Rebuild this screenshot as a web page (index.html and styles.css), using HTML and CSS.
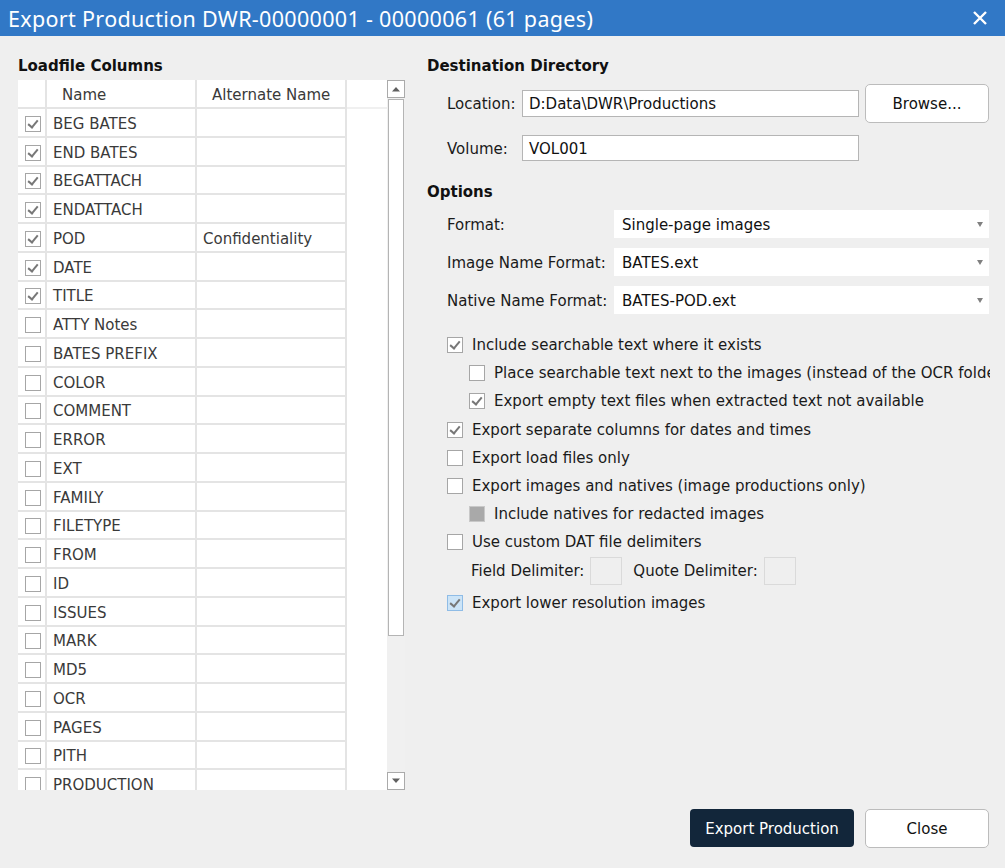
FILE: index.html
```html
<!DOCTYPE html>
<html>
<head>
<meta charset="utf-8">
<link rel="stylesheet" href="styles.css">
</head>
<body>
<div class="dialog">
  <div class="titlebar">
    <span class="title">Export Production DWR-00000001 - 00000061 (61 pages)</span>
    <svg class="close-x" width="16" height="16" viewBox="0 0 16 16"><path d="M2 2 L14 14 M14 2 L2 14" stroke="#fff" stroke-width="2.4" fill="none"/></svg>
  </div>
  <div class="main">
    <div class="left">
      <div class="heading">Loadfile Columns</div>
      <div class="table">
        <div class="grid">
          <div class="row head">
            <div class="c c1"></div>
            <div class="c c2">Name</div>
            <div class="c c3">Alternate Name</div>
            <div class="c c4"></div>
          </div>
          <div class="row"><div class="c c1"><span class="cb on"></span></div><div class="c c2">BEG BATES</div><div class="c c3"></div><div class="c c4"></div></div>
          <div class="row"><div class="c c1"><span class="cb on"></span></div><div class="c c2">END BATES</div><div class="c c3"></div><div class="c c4"></div></div>
          <div class="row"><div class="c c1"><span class="cb on"></span></div><div class="c c2">BEGATTACH</div><div class="c c3"></div><div class="c c4"></div></div>
          <div class="row"><div class="c c1"><span class="cb on"></span></div><div class="c c2">ENDATTACH</div><div class="c c3"></div><div class="c c4"></div></div>
          <div class="row"><div class="c c1"><span class="cb on"></span></div><div class="c c2">POD</div><div class="c c3">Confidentiality</div><div class="c c4"></div></div>
          <div class="row"><div class="c c1"><span class="cb on"></span></div><div class="c c2">DATE</div><div class="c c3"></div><div class="c c4"></div></div>
          <div class="row"><div class="c c1"><span class="cb on"></span></div><div class="c c2">TITLE</div><div class="c c3"></div><div class="c c4"></div></div>
          <div class="row"><div class="c c1"><span class="cb"></span></div><div class="c c2">ATTY Notes</div><div class="c c3"></div><div class="c c4"></div></div>
          <div class="row"><div class="c c1"><span class="cb"></span></div><div class="c c2">BATES PREFIX</div><div class="c c3"></div><div class="c c4"></div></div>
          <div class="row"><div class="c c1"><span class="cb"></span></div><div class="c c2">COLOR</div><div class="c c3"></div><div class="c c4"></div></div>
          <div class="row"><div class="c c1"><span class="cb"></span></div><div class="c c2">COMMENT</div><div class="c c3"></div><div class="c c4"></div></div>
          <div class="row"><div class="c c1"><span class="cb"></span></div><div class="c c2">ERROR</div><div class="c c3"></div><div class="c c4"></div></div>
          <div class="row"><div class="c c1"><span class="cb"></span></div><div class="c c2">EXT</div><div class="c c3"></div><div class="c c4"></div></div>
          <div class="row"><div class="c c1"><span class="cb"></span></div><div class="c c2">FAMILY</div><div class="c c3"></div><div class="c c4"></div></div>
          <div class="row"><div class="c c1"><span class="cb"></span></div><div class="c c2">FILETYPE</div><div class="c c3"></div><div class="c c4"></div></div>
          <div class="row"><div class="c c1"><span class="cb"></span></div><div class="c c2">FROM</div><div class="c c3"></div><div class="c c4"></div></div>
          <div class="row"><div class="c c1"><span class="cb"></span></div><div class="c c2">ID</div><div class="c c3"></div><div class="c c4"></div></div>
          <div class="row"><div class="c c1"><span class="cb"></span></div><div class="c c2">ISSUES</div><div class="c c3"></div><div class="c c4"></div></div>
          <div class="row"><div class="c c1"><span class="cb"></span></div><div class="c c2">MARK</div><div class="c c3"></div><div class="c c4"></div></div>
          <div class="row"><div class="c c1"><span class="cb"></span></div><div class="c c2">MD5</div><div class="c c3"></div><div class="c c4"></div></div>
          <div class="row"><div class="c c1"><span class="cb"></span></div><div class="c c2">OCR</div><div class="c c3"></div><div class="c c4"></div></div>
          <div class="row"><div class="c c1"><span class="cb"></span></div><div class="c c2">PAGES</div><div class="c c3"></div><div class="c c4"></div></div>
          <div class="row"><div class="c c1"><span class="cb"></span></div><div class="c c2">PITH</div><div class="c c3"></div><div class="c c4"></div></div>
          <div class="row"><div class="c c1"><span class="cb"></span></div><div class="c c2">PRODUCTION</div><div class="c c3"></div><div class="c c4"></div></div>
        </div>
        <div class="scrollbar">
          <div class="sb-btn"><svg width="10" height="6" viewBox="0 0 10 6"><path d="M1 5.5 L5 1 L9 5.5 Z" fill="#606060"/></svg></div>
          <div class="sb-track"><div class="sb-thumb"></div></div>
          <div class="sb-btn"><svg width="10" height="6" viewBox="0 0 10 6"><path d="M1 0.5 L5 5 L9 0.5 Z" fill="#606060"/></svg></div>
        </div>
      </div>
    </div>
    <div class="right">
      <div class="heading">Destination Directory</div>
      <div class="frow loc">
        <span class="lbl">Location:</span>
        <div class="input">D:Data\DWR\Productions</div>
        <div class="btn light browse">Browse...</div>
      </div>
      <div class="frow vol">
        <span class="lbl">Volume:</span>
        <div class="input">VOL001</div>
      </div>
      <div class="heading opts">Options</div>
      <div class="srow"><span class="slbl">Format:</span><div class="select">Single-page images<span class="arrow"></span></div></div>
      <div class="srow"><span class="slbl">Image Name Format:</span><div class="select">BATES.ext<span class="arrow"></span></div></div>
      <div class="srow"><span class="slbl">Native Name Format:</span><div class="select">BATES-POD.ext<span class="arrow"></span></div></div>
      <div class="checks">
        <div class="crow"><span class="cb on"></span><span>Include searchable text where it exists</span></div>
        <div class="crow sub"><span class="cb"></span><span class="clip">Place searchable text next to the images (instead of the OCR folder)</span></div>
        <div class="crow sub"><span class="cb on"></span><span>Export empty text files when extracted text not available</span></div>
        <div class="crow"><span class="cb on"></span><span>Export separate columns for dates and times</span></div>
        <div class="crow"><span class="cb"></span><span>Export load files only</span></div>
        <div class="crow"><span class="cb"></span><span>Export images and natives (image productions only)</span></div>
        <div class="crow sub"><span class="cb dis"></span><span>Include natives for redacted images</span></div>
        <div class="crow"><span class="cb"></span><span>Use custom DAT file delimiters</span></div>
        <div class="crow delim"><span>Field Delimiter:</span><span class="dbox"></span><span class="qlbl">Quote Delimiter:</span><span class="dbox"></span></div>
        <div class="crow last"><span class="cb on hover"></span><span>Export lower resolution images</span></div>
      </div>
    </div>
  </div>
  <div class="footer">
    <div class="btn dark">Export Production</div>
    <div class="btn light close">Close</div>
  </div>
</div>
</body>
</html>
```

FILE: styles.css
```css
* { box-sizing: border-box; }
html, body { margin: 0; padding: 0; }
body {
  width: 1005px;
  height: 868px;
  overflow: hidden;
  background: #efefef;
  font-family: "DejaVu Sans", Verdana, sans-serif;
  font-size: 15px;
  color: #1a1a1a;
}
.dialog {
  height: 868px;
  display: flex;
  flex-direction: column;
}
.titlebar {
  height: 36px;
  flex: none;
  background: #3178c6;
  color: #fff;
  display: flex;
  align-items: center;
  justify-content: space-between;
  padding: 0 17px 0 8px;
}
.title {
  font-family: "Noto Sans", "Open Sans", sans-serif;
  font-size: 21.5px;
  letter-spacing: 0.32px;
}
.main {
  flex: 1;
  display: flex;
  gap: 22px;
  padding: 17px 16px 0 18px;
}
.heading {
  height: 27px;
  line-height: 25px;
  padding-top: 1px;
  font-weight: bold;
  font-size: 15px;
  color: #111;
}
.left { width: 387px; flex: none; }
.table {
  height: 710px;
  display: flex;
  background: #fff;
}
.grid {
  width: 369px;
  overflow: hidden;
  color: #3a3a3a;
}
.row {
  display: flex;
  height: 28.75px;
}
.row.head { height: 29px; }
.c {
  height: 100%;
  display: flex;
  align-items: center;
  border-bottom: 2px solid #e4e4e4;
  border-right: 2px solid #e4e4e4;
  padding-left: 6px;
  padding-top: 3px;
  white-space: nowrap;
  overflow: hidden;
}
.head .c { padding-top: 2px; }
.c1 { width: 29px; padding-left: 7px; }
.c2 { width: 150px; }
.c3 { width: 150px; }
.c4 { flex: 1; border-right: none; border-bottom: none; }
.head .c2, .head .c3 { padding-left: 15px; }
.head .c4 { border-bottom: 2px solid #f0f0f0; }

.cb {
  width: 16px;
  height: 16px;
  flex: none;
  border: 1px solid #a6a6a6;
  background: #fff;
  position: relative;
  display: inline-block;
}
.cb.on::after {
  content: "";
  position: absolute;
  left: 4px;
  top: 1px;
  width: 4px;
  height: 8px;
  border-right: 2px solid #777;
  border-bottom: 2px solid #777;
  transform: rotate(40deg);
}
.cb.dis { background: #a9a9a9; border-color: #c8c8c8; }
.cb.hover { background: #cce4f7; border-color: #8fbce6; }

.scrollbar {
  width: 18px;
  flex: none;
  background: #f0f0f0;
  display: flex;
  flex-direction: column;
}
.sb-btn {
  height: 18px;
  flex: none;
  border: 1px solid #aaa;
  background: #fff;
  display: flex;
  align-items: center;
  justify-content: center;
}
.sb-track { flex: 1; padding: 1px 1px 0 1px; }
.sb-thumb {
  height: 537px;
  background: #fff;
  border: 1px solid #b4b4b4;
}

.right { flex: 1; min-width: 0; }
.frow {
  display: flex;
  align-items: center;
  padding-left: 20px;
}
.frow.loc { height: 39px; margin-top: 4px; }
.frow.vol { height: 26px; margin-top: 12px; }
.lbl { width: 75px; flex: none; padding-top: 1px; }
.input {
  width: 337px;
  height: 27px;
  border: 1px solid #b5b5b5;
  background: #fff;
  padding-left: 6px;
  padding-top: 1px;
  display: flex;
  align-items: center;
  color: #111;
}
.vol .input { height: 26px; }
.btn {
  display: flex;
  align-items: center;
  justify-content: center;
  border-radius: 5px;
  font-size: 15px;
  padding-top: 1px;
}
.btn.light { background: #fff; border: 1px solid #bcbcbc; color: #111; }
.browse { width: 124px; height: 39px; margin-left: 6px; }
.heading.opts { margin-top: 18px; }
.srow {
  display: flex;
  align-items: center;
  padding-left: 20px;
  height: 28px;
  margin-top: 10px;
}
.heading.opts + .srow { margin-top: 4px; }
.slbl { width: 167px; flex: none; padding-top: 1px; }
.select {
  flex: 1;
  height: 28px;
  background: #fff;
  display: flex;
  align-items: center;
  padding-left: 8px;
  padding-top: 1px;
  position: relative;
  color: #111;
}
.arrow {
  position: absolute;
  right: 6px;
  top: 12px;
  width: 0;
  height: 0;
  border-left: 3.5px solid transparent;
  border-right: 3.5px solid transparent;
  border-top: 5px solid #808080;
}
.checks { margin-top: 17px; padding-left: 20px; }
.crow {
  display: flex;
  align-items: center;
  gap: 9px;
  height: 28.2px;
  white-space: nowrap;
}
.crow.sub { padding-left: 22px; }
.clip { overflow: hidden; width: 496px; flex: none; }
.crow.delim { padding-left: 24px; gap: 0; height: 28px; margin-top: 0; }
.dbox {
  width: 32px;
  height: 28px;
  border: 1px solid #dadada;
  margin-left: 6px;
}
.qlbl { margin-left: 11px; }
.crow.last { margin-top: 4px; }

.footer {
  flex: none;
  display: flex;
  justify-content: flex-end;
  gap: 11px;
  padding: 0 16px 20px 0;
}
.btn.dark {
  width: 164px;
  height: 38px;
  background: #12263a;
  color: #fff;
  border-radius: 4px;
}
.close { width: 124px; height: 39px; }
```
